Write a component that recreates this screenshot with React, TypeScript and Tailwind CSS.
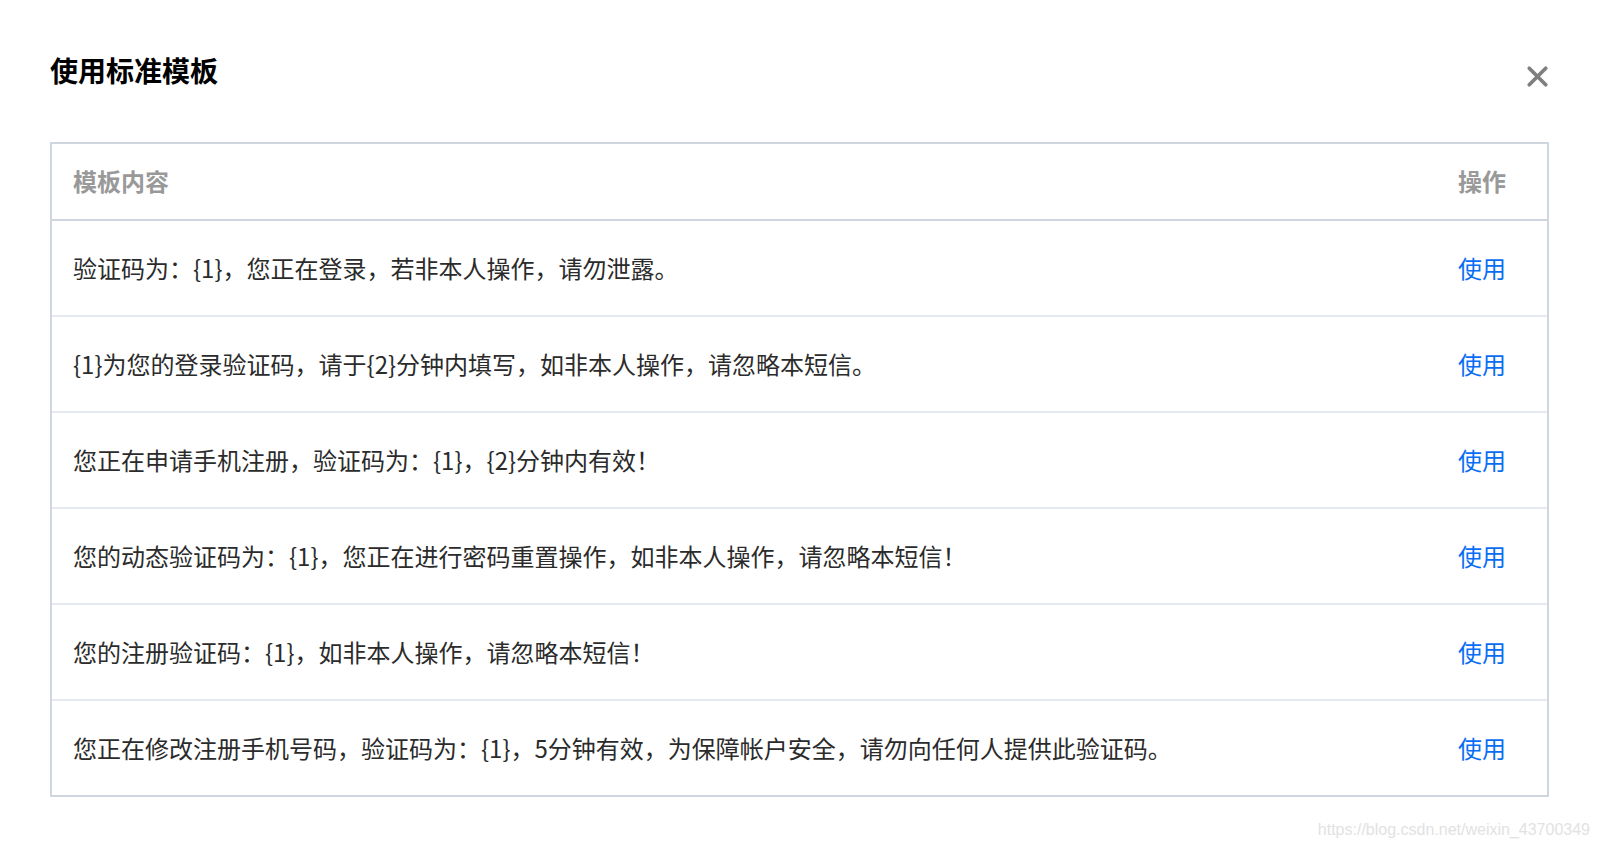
import { X } from "lucide-react";

// ─── Data ───────────────────────────────────────────────────────────────────

const templates: string[] = [
  "验证码为：{1}，您正在登录，若非本人操作，请勿泄露。",
  "{1}为您的登录验证码，请于{2}分钟内填写，如非本人操作，请忽略本短信。",
  "您正在申请手机注册，验证码为：{1}，{2}分钟内有效！",
  "您的动态验证码为：{1}，您正在进行密码重置操作，如非本人操作，请忽略本短信！",
  "您的注册验证码：{1}，如非本人操作，请忽略本短信！",
  "您正在修改注册手机号码，验证码为：{1}，5分钟有效，为保障帐户安全，请勿向任何人提供此验证码。",
];

const font = { fontFamily: '"Noto Sans CJK SC", "Noto Sans", sans-serif' };

// ─── Template Row ───────────────────────────────────────────────────────────

function TemplateRow({ text, last }: { text: string; last: boolean }) {
  return (
    <div
      className={`flex items-center ${
        last ? "h-[94px]" : "h-[96px] border-b-2 border-[#e6e9ef]"
      }`}
    >
      <p className="flex-1 pl-[21px] text-[24px] leading-[24px] text-[#2b2b2b]">{text}</p>
      <button
        type="button"
        className="w-[89px] shrink-0 text-left text-[24px] leading-[24px] text-[#0a6ef5]"
      >
        使用
      </button>
    </div>
  );
}

// ─── App ────────────────────────────────────────────────────────────────────

export default function App() {
  return (
    <div className="relative h-[848px] w-[1600px] overflow-hidden bg-white" style={font}>
      <div className="pl-[50px] pr-[51px] pt-[56px]">
        {/* Header */}
        <div className="flex items-start justify-between">
          <h1 className="text-[28px] leading-[28px] font-bold text-black">使用标准模板</h1>
          <button
            type="button"
            aria-label="Close"
            className="mt-[4px] -mr-[5px] flex h-[33px] w-[33px] items-center justify-center text-[#7f7f7f]"
          >
            <X size={33} strokeWidth={2.7} />
          </button>
        </div>

        {/* Table */}
        <div className="mt-[49px] border-2 border-[#d0d6e0]">
          <div className="flex h-[77px] items-center border-b-2 border-[#d0d6e0] pb-[2px]">
            <span className="flex-1 pl-[21px] text-[24px] leading-[24px] font-bold text-[#999999]">
              模板内容
            </span>
            <span className="w-[89px] shrink-0 text-[24px] leading-[24px] font-bold text-[#999999]">
              操作
            </span>
          </div>
          {templates.map((t, i) => (
            <TemplateRow key={t} text={t} last={i === templates.length - 1} />
          ))}
        </div>
      </div>

      {/* Watermark */}
      <div
        className="absolute right-[10px] bottom-[9px] text-[16px] leading-[18px] text-[#e2e2e2]"
        style={{ fontFamily: '"Liberation Sans", Arial, sans-serif' }}
      >
        https://blog.csdn.net/weixin_43700349
      </div>
    </div>
  );
}
